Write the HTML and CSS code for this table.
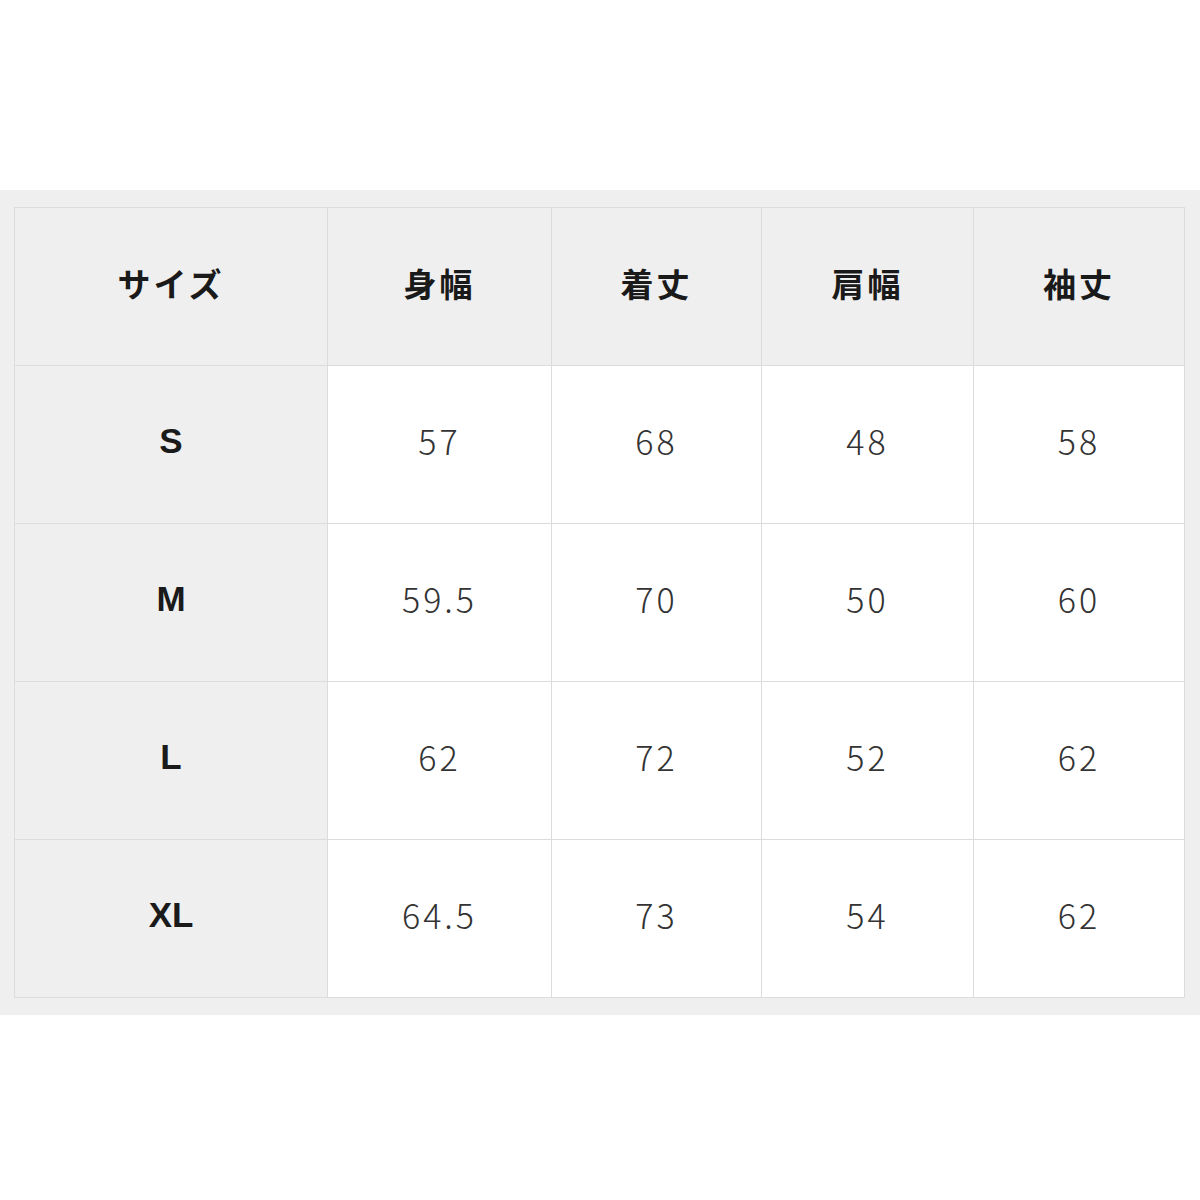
FILE: index.html
```html
<!DOCTYPE html>
<html lang="ja">
<head>
<meta charset="utf-8">
<link rel="stylesheet" href="styles.css">
</head>
<body>
<div class="band">
  <table class="size-table">
    <colgroup>
      <col class="c1"><col class="c2"><col class="c3"><col class="c4"><col class="c5">
    </colgroup>
    <thead>
      <tr><th>サイズ</th><th>身幅</th><th>着丈</th><th>肩幅</th><th>袖丈</th></tr>
    </thead>
    <tbody>
      <tr><th>S</th><td>57</td><td>68</td><td>48</td><td>58</td></tr>
      <tr><th>M</th><td>59.5</td><td>70</td><td>50</td><td>60</td></tr>
      <tr><th>L</th><td>62</td><td>72</td><td>52</td><td>62</td></tr>
      <tr><th>XL</th><td>64.5</td><td>73</td><td>54</td><td>62</td></tr>
    </tbody>
  </table>
</div>
</body>
</html>
```
FILE: styles.css
```css
html, body {
  margin: 0;
  padding: 0;
  background: #ffffff;
}
.band {
  margin-top: 190px;
  background: #efefef;
  padding: 17px 16px 17px 14px;
}
.size-table {
  width: 1170px;
  border-collapse: collapse;
  table-layout: fixed;
  border: 1px solid #dcdcdc;
}
.c1 { width: 313px; }
.c2 { width: 224px; }
.c3 { width: 210px; }
.c4 { width: 212px; }
.c5 { width: 211px; }
.size-table tr {
  height: 158px;
}
.size-table th,
.size-table td {
  padding: 0 0 8px 0;
  border: 1px solid #dcdcdc;
  text-align: center;
  vertical-align: middle;
}
.size-table thead th {
  background: #efefef;
  font-family: "Noto Sans CJK JP", sans-serif;
  font-weight: 700;
  font-size: 33px;
  letter-spacing: 3px;
  color: #1a1a1a;
}
.size-table tbody th {
  background: #efefef;
  font-family: "Liberation Sans", Arial, sans-serif;
  font-weight: 700;
  font-size: 35px;
  color: #1a1a1a;
}
.size-table td {
  background: #ffffff;
  font-family: "Noto Sans CJK JP", sans-serif;
  font-weight: 300;
  font-size: 34px;
  letter-spacing: 3px;
  color: #333333;
}
```
